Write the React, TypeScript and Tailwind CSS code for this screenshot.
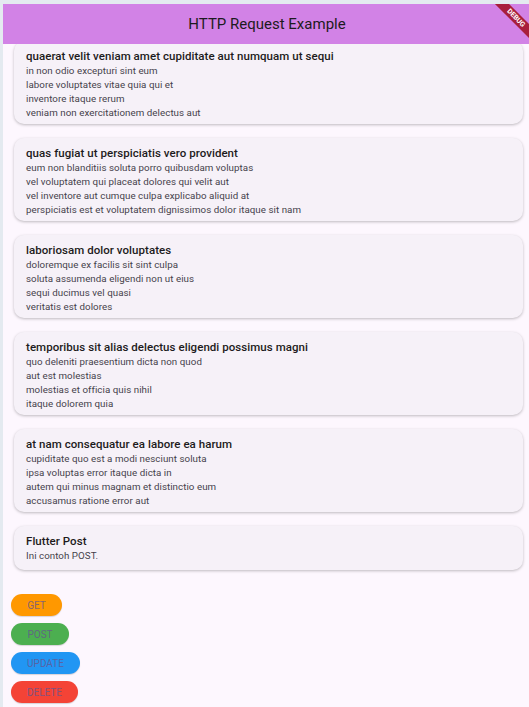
import React from "react";

interface Post {
  title: string;
  body: string;
}

const posts: Post[] = [
  {
    title: "quaerat velit veniam amet cupiditate aut numquam ut sequi",
    body: "in non odio excepturi sint eum\nlabore voluptates vitae quia qui et\ninventore itaque rerum\nveniam non exercitationem delectus aut",
  },
  {
    title: "quas fugiat ut perspiciatis vero provident",
    body: "eum non blanditiis soluta porro quibusdam voluptas\nvel voluptatem qui placeat dolores qui velit aut\nvel inventore aut cumque culpa explicabo aliquid at\nperspiciatis est et voluptatem dignissimos dolor itaque sit nam",
  },
  {
    title: "laboriosam dolor voluptates",
    body: "doloremque ex facilis sit sint culpa\nsoluta assumenda eligendi non ut eius\nsequi ducimus vel quasi\nveritatis est dolores",
  },
  {
    title: "temporibus sit alias delectus eligendi possimus magni",
    body: "quo deleniti praesentium dicta non quod\naut est molestias\nmolestias et officia quis nihil\nitaque dolorem quia",
  },
  {
    title: "at nam consequatur ea labore ea harum",
    body: "cupiditate quo est a modi nesciunt soluta\nipsa voluptas error itaque dicta in\nautem qui minus magnam et distinctio eum\naccusamus ratione error aut",
  },
  { title: "Flutter Post", body: "Ini contoh POST." },
];

const buttons = [
  { label: "GET", cls: "bg-[#ff9800] w-[51px] text-[#65558f]/80" },
  { label: "POST", cls: "bg-[#4caf50] w-[58px] text-[#65558f]/80" },
  { label: "UPDATE", cls: "bg-[#2196f3] w-[69px] text-[#65558f]/80" },
  { label: "DELETE", cls: "bg-[#f44336] w-[67px] text-[#65558f]/80" },
];

export default function App() {
  return (
    <div className="h-[707px] w-[529px] flex flex-col bg-[#e4eaf0] pt-[4px] font-['Roboto',sans-serif] overflow-hidden">
      <div className="flex-1 min-h-0 flex flex-col ml-[3px] bg-[#fdf7fe] relative">
        {/* APP BAR */}
        <div className="h-[40px] shrink-0 bg-[#d282e6] flex items-center justify-center z-10">
          <h1 className="text-[15px] text-[#1d1b20] pl-[2px]">HTTP Request Example</h1>
        </div>

        {/* POSTS LIST */}
        <div className="flex-1 min-h-0 overflow-hidden">
          <div className="-mt-[3px] flex flex-col gap-[14px] ml-[11px] mr-[6px]">
            {posts.map((post, i) => (
              <div
                key={i}
                className="bg-[#f6f1f8] rounded-[10px] shadow-[0_1px_3px_rgba(0,0,0,0.25)] px-[12px] pt-[7px] pb-[4px] min-h-[44px]"
              >
                <h2 className="text-[11.5px] leading-[16px] font-medium tracking-[0.05px] text-[#1d1b20]">{post.title}</h2>
                <p className="text-[9.75px] leading-[14px] tracking-[0.05px] text-[#45414b] whitespace-pre-line">{post.body}</p>
              </div>
            ))}
          </div>
        </div>

        {/* BUTTONS */}
        <div className="shrink-0 flex flex-col items-start gap-[7px] pl-[8px] pt-[8px] pb-[4px]">
          {buttons.map((b) => (
            <button
              key={b.label}
              className={`${b.cls} h-[22px] rounded-full text-[10px] flex items-center justify-center shadow-[0_1px_1px_rgba(0,0,0,0.15)]`}
            >
              {b.label}
            </button>
          ))}
        </div>

        {/* DEBUG BANNER */}
        <div className="absolute top-0 right-0 w-[40px] h-[40px] overflow-hidden pointer-events-none z-20">
          <div className="absolute left-[-3px] top-[9px] w-[60px] h-[10px] bg-[#a81e3c] rotate-45 flex items-center justify-center">
            <span className="text-[7px] font-bold text-white leading-none">DEBUG</span>
          </div>
        </div>
      </div>
    </div>
  );
}
